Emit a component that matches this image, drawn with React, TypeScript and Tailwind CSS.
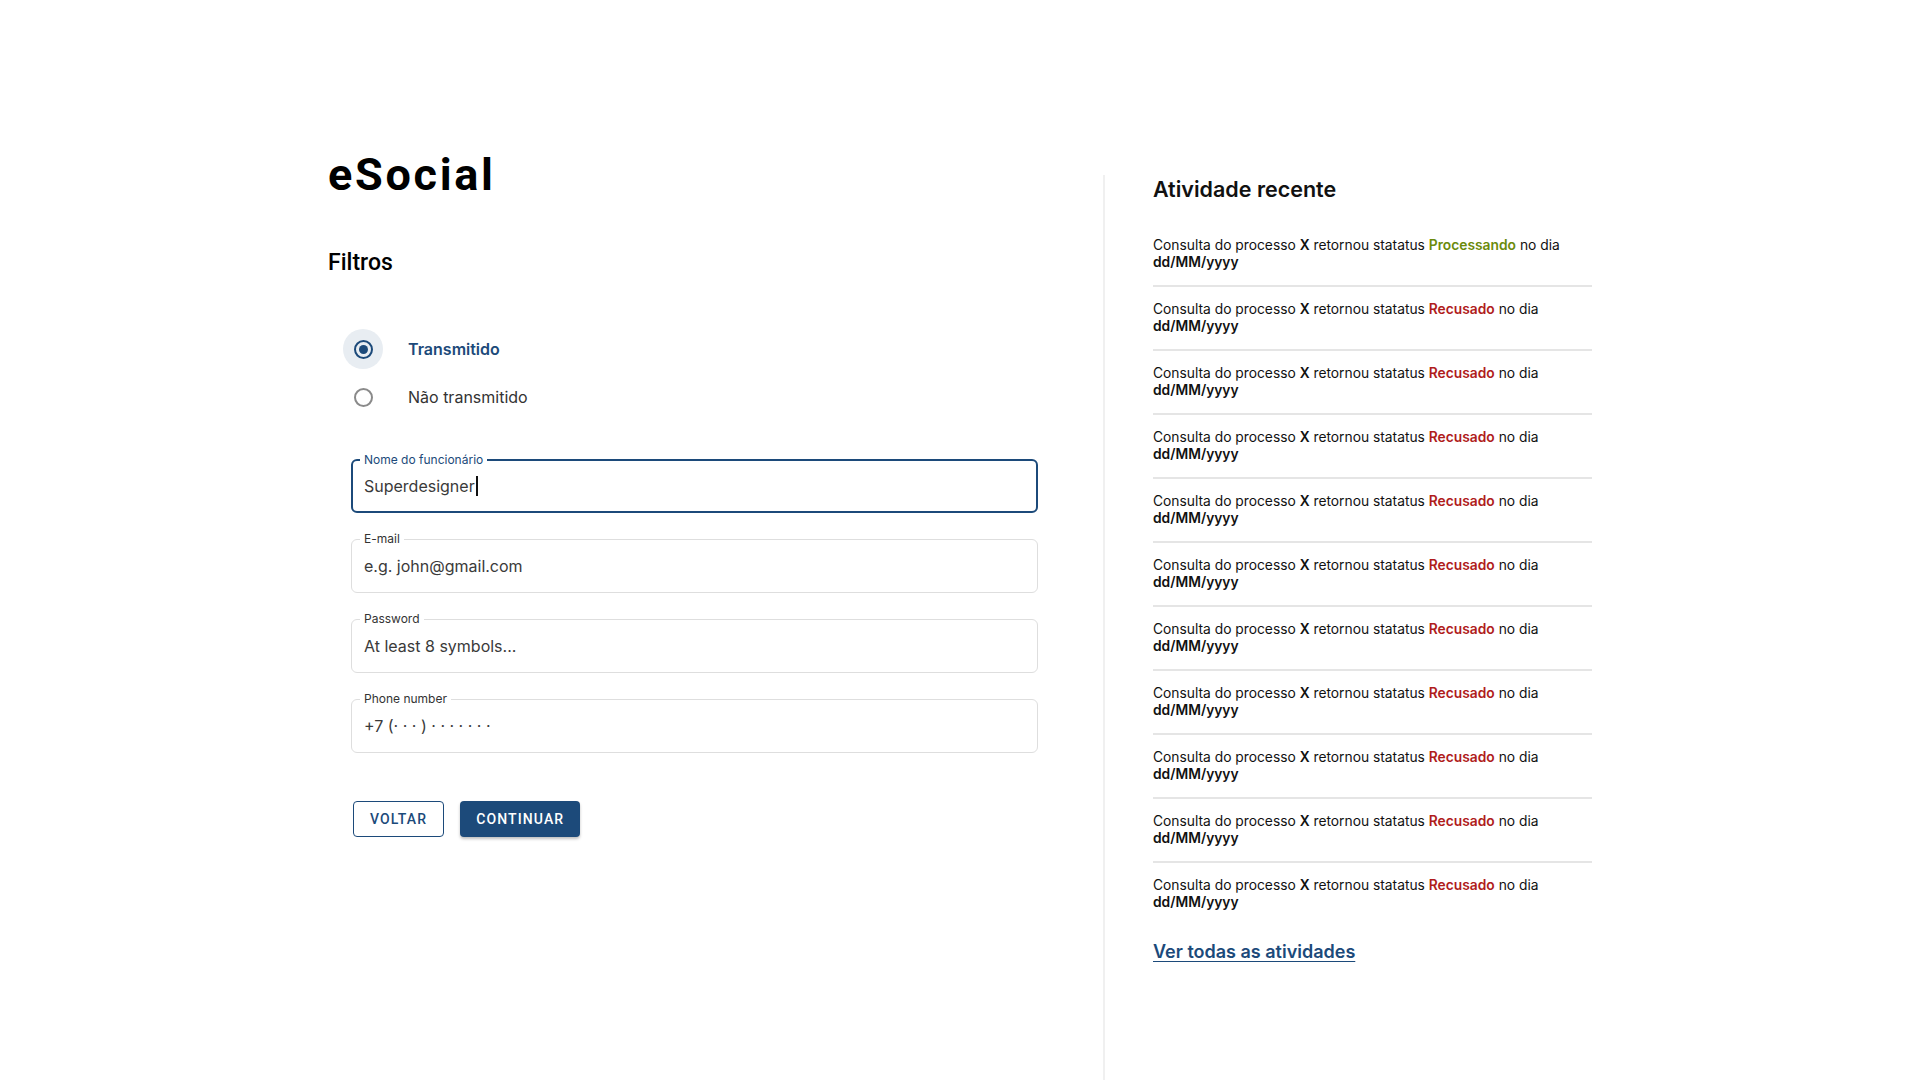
import React from "react";

function Field({
  label,
  value,
  focused,
}: {
  label: string;
  value: string;
  focused?: boolean;
}) {
  return (
    <div
      className={
        focused
          ? "relative h-[54px] rounded-md border-2 border-[#1c4a7a] flex items-center px-[11px]"
          : "relative h-[54px] rounded-md border border-[#dedede] flex items-center px-[12px]"
      }
    >
      <span
        className={
          focused
            ? "absolute left-[7px] top-[-8px] bg-white px-[4px] text-[12px] leading-[14px] text-[#1c4a7a]"
            : "absolute left-[8px] top-[-8px] bg-white px-[4px] text-[12px] leading-[14px] text-[#333333]"
        }
      >
        {label}
      </span>
      <span className="text-[16px] leading-[24px] text-[#3a3a3a] flex items-center">
        {value}
        {focused && <span className="inline-block w-[2px] h-[20px] bg-[#111] ml-[1px]" />}
      </span>
    </div>
  );
}

function Item({ status, last }: { status: "p" | "r"; last?: boolean }) {
  return (
    <div
      className={
        last
          ? "py-[14px] text-[13.8px] leading-[17px] text-[#111]"
          : "py-[14px] text-[13.8px] leading-[17px] text-[#111] border-b-2 border-[#e5e5e5]"
      }
    >
      <div>
        Consulta do processo <span className="font-semibold">X</span> retornou statatus{" "}
        {status === "p" ? (
          <span className="font-semibold text-[#6b8a0c]">Processando</span>
        ) : (
          <span className="font-semibold text-[#b01c1c]">Recusado</span>
        )}{" "}
        no dia
      </div>
      <div className="font-semibold">dd/MM/yyyy</div>
    </div>
  );
}

export default function App() {
  const statuses: ("p" | "r")[] = ["p", "r", "r", "r", "r", "r", "r", "r", "r", "r", "r"];
  return (
    <div className="min-h-screen bg-white flex justify-center font-['Inter',sans-serif]">
      <div className="w-[1264px] flex">
        <div className="w-[775px] pt-[152px]">
          <h1 className="font-['Roboto',sans-serif] text-[45px] leading-[46px] font-bold tracking-[0.06em] text-black">
            eSocial
          </h1>
          <h2 className="mt-[53px] font-['Roboto',sans-serif] text-[23px] leading-[23px] font-medium text-black">
            Filtros
          </h2>

          <div className="mt-[55px] ml-[15px] flex flex-col gap-[8px]">
            <div className="flex items-center h-[40px]">
              <div className="w-[40px] h-[40px] rounded-full bg-[#e8edf2] flex items-center justify-center">
                <div className="w-[19px] h-[19px] rounded-full border-2 border-[#1c4a7a] flex items-center justify-center">
                  <div className="w-[9px] h-[9px] rounded-full bg-[#1c4a7a]" />
                </div>
              </div>
              <span className="ml-[25px] text-[16px] font-semibold text-[#1c4a7a]">Transmitido</span>
            </div>
            <div className="flex items-center h-[40px]">
              <div className="w-[40px] h-[40px] rounded-full flex items-center justify-center">
                <div className="w-[19px] h-[19px] rounded-full border-2 border-[#8a8a8a]" />
              </div>
              <span className="ml-[25px] text-[16px] text-[#333333]">Não transmitido</span>
            </div>
          </div>

          <div className="mt-[42px] ml-[23px] w-[687px] flex flex-col gap-[26px]">
            <Field label="Nome do funcionário" value="Superdesigner" focused />
            <Field label="E-mail" value="e.g. john@gmail.com" />
            <Field label="Password" value="At least 8 symbols..." />
            <Field label="Phone number" value="+7 (· · · ) · · · · · · ·" />
          </div>

          <div className="mt-[48px] ml-[25px] flex gap-[16px] font-['Roboto',sans-serif]">
            <button className="h-[36px] px-[16px] rounded-[4px] border border-[#1c4a7a] text-[#1c4a7a] text-[14px] font-medium tracking-[0.08em] bg-white">
              VOLTAR
            </button>
            <button className="h-[36px] px-[16px] rounded-[4px] bg-[#1c4a7a] text-white text-[14px] font-medium tracking-[0.08em] shadow-[0_2px_3px_rgba(0,0,0,0.25)]">
              CONTINUAR
            </button>
          </div>
        </div>

        <div className="mt-[175px] w-[489px] border-l-2 border-[#f0f0f0] pl-[48px]">
          <h2 className="text-[21.5px] leading-[28px] font-semibold text-[#111]">Atividade recente</h2>
          <div className="mt-[20px] flex flex-col">
            {statuses.map((s, i) => (
              <Item key={i} status={s} last={i === statuses.length - 1} />
            ))}
          </div>
          <a
            href="#"
            className="mt-[15px] inline-block text-[18px] leading-[24px] font-semibold text-[#1c4a7a] underline underline-offset-[3px]"
          >
            Ver todas as atividades
          </a>
        </div>
      </div>
    </div>
  );
}
